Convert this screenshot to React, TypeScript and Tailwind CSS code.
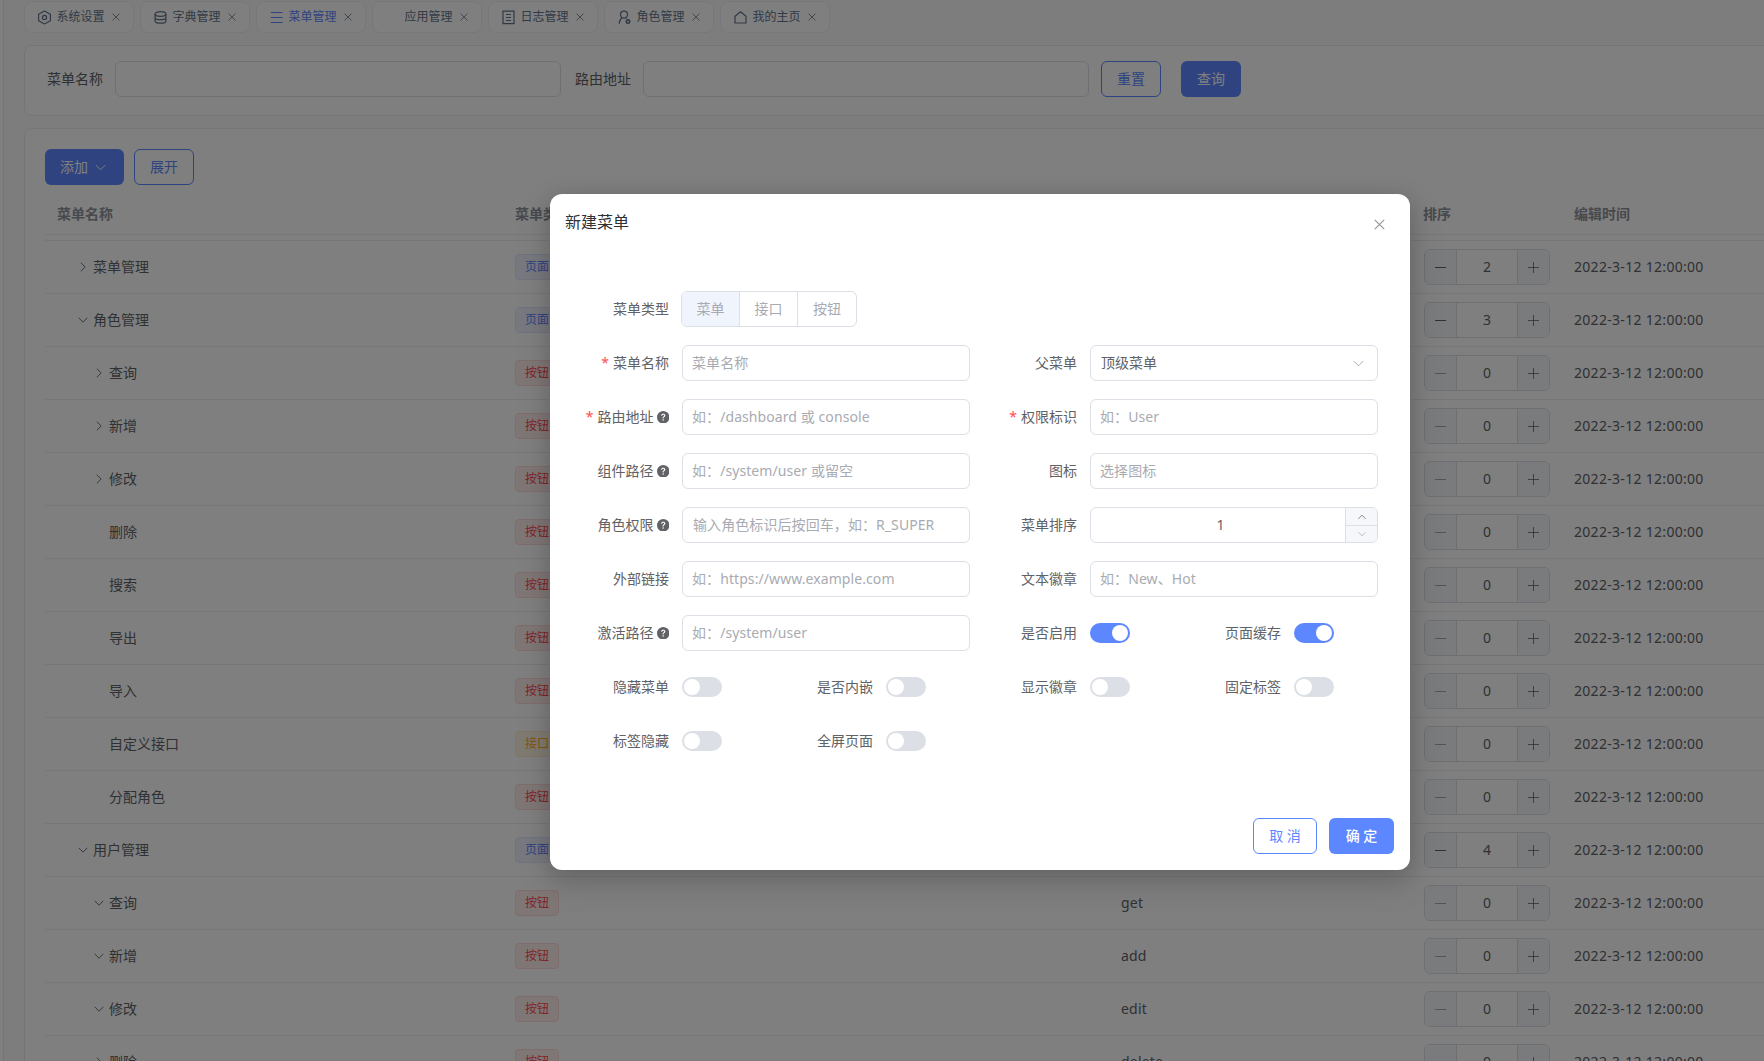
import type { ReactNode } from 'react'
import { BsQuestionCircleFill } from 'react-icons/bs'

const tabs = [
  { name: '系统设置', icon: 'setting' },
  { name: '字典管理', icon: 'dict' },
  { name: '菜单管理', icon: 'menu', active: true },
  { name: '应用管理', icon: '' },
  { name: '日志管理', icon: 'log' },
  { name: '角色管理', icon: 'role' },
  { name: '我的主页', icon: 'home' }
]

type Row = { name: string; level: number; arrow?: 'right' | 'down'; type: string; auth?: string; sort: number }

const rows: Row[] = [
  { name: '菜单管理', level: 1, arrow: 'right', type: '页面', sort: 2 },
  { name: '角色管理', level: 1, arrow: 'down', type: '页面', sort: 3 },
  { name: '查询', level: 2, arrow: 'right', type: '按钮', sort: 0 },
  { name: '新增', level: 2, arrow: 'right', type: '按钮', sort: 0 },
  { name: '修改', level: 2, arrow: 'right', type: '按钮', sort: 0 },
  { name: '删除', level: 2, type: '按钮', sort: 0 },
  { name: '搜索', level: 2, type: '按钮', sort: 0 },
  { name: '导出', level: 2, type: '按钮', sort: 0 },
  { name: '导入', level: 2, type: '按钮', sort: 0 },
  { name: '自定义接口', level: 2, type: '接口', sort: 0 },
  { name: '分配角色', level: 2, type: '按钮', sort: 0 },
  { name: '用户管理', level: 1, arrow: 'down', type: '页面', sort: 4 },
  { name: '查询', level: 2, arrow: 'down', type: '按钮', auth: 'get', sort: 0 },
  { name: '新增', level: 2, arrow: 'down', type: '按钮', auth: 'add', sort: 0 },
  { name: '修改', level: 2, arrow: 'down', type: '按钮', auth: 'edit', sort: 0 },
  { name: '删除', level: 2, arrow: 'right', type: '按钮', auth: 'delete', sort: 0 }
]

const tagStyles: Record<string, string> = {
  页面: 'bg-[#eff3ff] border-[#dfe7ff] text-[#5d87ff]',
  按钮: 'bg-[#ffeded] border-[#ffdbdb] text-[#ff4d4f]',
  接口: 'bg-[#fff6e6] border-[#ffedcc] text-[#ffae1f]'
}

const tableCols = 'grid grid-cols-[458px_303px_303px_303px_150px_400px]'

function TabIcon({ name }: { name: string }) {
  return (
    <svg className="size-[15px]" viewBox="0 0 15 15" fill="none" stroke="currentColor" strokeWidth="1.2">
      {name === 'setting' && (
        <>
          <path d="M7.5 1 13.4 4.2v6.6L7.5 14 1.6 10.8V4.2Z" strokeLinejoin="round" />
          <circle cx="7.5" cy="7.5" r="2.1" />
        </>
      )}
      {name === 'dict' && (
        <>
          <ellipse cx="7.5" cy="4" rx="5.4" ry="2.3" />
          <path d="M2.1 4v6.9c0 1.3 2.4 2.3 5.4 2.3s5.4-1 5.4-2.3V4M2.1 7.4c0 1.3 2.4 2.3 5.4 2.3s5.4-1 5.4-2.3" />
        </>
      )}
      {name === 'menu' && <path d="M1.8 2.5h11.8M1.8 7.5h11.8M1.8 12.5h11.8" />}
      {name === 'log' && <path d="M2 1.2h11v12.4H2ZM5 4.5h5M5 7.5h5M5 10.5h5" />}
      {name === 'role' && (
        <>
          <circle cx="7" cy="4.6" r="3.5" />
          <path d="M5.2 7.8C3.2 9 2.4 11 2.2 13.8M8.6 7.8l1 .8" />
          <circle cx="11" cy="11.6" r="1.7" strokeWidth="1.6" />
        </>
      )}
      {name === 'home' && <path d="M2 13V6.2L7.5 1.7 13 6.2V13Z" strokeLinejoin="round" />}
    </svg>
  )
}

function Cross({ className }: { className: string }) {
  return (
    <svg className={className} viewBox="0 0 10 10" fill="none" stroke="currentColor">
      <path d="M.7.7l8.6 8.6M9.3.7.7 9.3" />
    </svg>
  )
}

function Chevron({ className }: { className: string }) {
  return (
    <svg className={className} viewBox="0 0 12 12" fill="none" stroke="currentColor" strokeWidth="0.9">
      <path d="M1.7 3.8 6 8.2l4.3-4.4" />
    </svg>
  )
}

function SortInput({ value }: { value: number }) {
  return (
    <div className="flex h-9 w-[126px] overflow-hidden rounded-md border border-[#dcdfe6] text-[#606266]">
      <div className={`flex w-8 items-center justify-center border-r border-[#dcdfe6] bg-[#f5f7fa] ${value === 0 ? 'text-[#a8abb2]' : ''}`}>
        <span className="h-px w-[11px] bg-current" />
      </div>
      <div className="flex-1 text-center leading-[34px]">{value}</div>
      <div className="flex w-8 items-center justify-center border-l border-[#dcdfe6] bg-[#f5f7fa]">
        <svg className="size-[11px]" viewBox="0 0 11 11" stroke="currentColor" strokeWidth="0.8">
          <path d="M0 5.5h11M5.5 0v11" />
        </svg>
      </div>
    </div>
  )
}

function Field({ label, required, tip, children }: { label: string; required?: boolean; tip?: boolean; children: ReactNode }) {
  return (
    <div className="flex h-9 items-center">
      <div className="flex w-[108px] shrink-0 items-center justify-end whitespace-nowrap pr-px">
        {required && <span className="mr-1 text-[#ff4d4f]">*</span>}
        <span>{label}</span>
        {tip && <BsQuestionCircleFill className="ml-[3px] size-[12.5px]" />}
      </div>
      <div className="ml-3">{children}</div>
    </div>
  )
}

function Input({ placeholder, className = 'pl-[9px]' }: { placeholder: string; className?: string }) {
  return (
    <input
      className={`block h-9 w-[288px] rounded-md border border-[#dcdfe6] pb-[2px] tracking-[0.08px] placeholder:text-[#a8abb2] ${className}`}
      placeholder={placeholder}
    />
  )
}

function Switch({ on }: { on?: boolean }) {
  return (
    <div className={`flex h-5 w-10 items-center rounded-full px-0.5 ${on ? 'justify-end bg-[#5d87ff]' : 'bg-[#dcdfe6]'}`}>
      <span className="size-4 rounded-full bg-white" />
    </div>
  )
}

function MenuDialog() {
  return (
    <div className="flex h-[676px] w-[860px] flex-col rounded-xl bg-white px-3 shadow-[0_12px_32px_4px_rgba(0,0,0,0.12),0_4px_20px_rgba(0,0,0,0.12)]">
      <div className="flex h-[97px] justify-between pl-[3px] pr-[13px]">
        <h3 className="pt-4 text-base leading-6 text-[#303133]">新建菜单</h3>
        <Cross className="mt-[25px] size-[11px] text-[#909399]" />
      </div>

      {/* Form */}
      <div className="flex flex-1 flex-col gap-[18px]">
        <Field label="菜单类型">
          <div className="-ml-px flex h-9 w-44 overflow-hidden rounded-md border border-[#dcdfe6] text-center leading-[34px] text-[#a8abb2]">
            <span className="w-[58px] border-r border-[#dcdfe6] bg-[#f0f4fd]">菜单</span>
            <span className="w-[58px] border-r border-[#dcdfe6]">接口</span>
            <span className="flex-1">按钮</span>
          </div>
        </Field>
        <div className="grid grid-cols-[408px_408px] gap-y-[18px]">
          <Field label="菜单名称" required>
            <Input placeholder="菜单名称" />
          </Field>
          <Field label="父菜单">
            <div className="flex h-9 w-[288px] items-center justify-between rounded-md border border-[#dcdfe6] pl-[10px] pr-3">
              <span>顶级菜单</span>
              <Chevron className="size-[13px] text-[#a8abb2]" />
            </div>
          </Field>
          <Field label="路由地址" required tip>
            <Input placeholder="如：/dashboard 或 console" />
          </Field>
          <Field label="权限标识" required>
            <Input placeholder="如：User" />
          </Field>
          <Field label="组件路径" tip>
            <Input placeholder="如：/system/user 或留空" />
          </Field>
          <Field label="图标">
            <Input placeholder="选择图标" />
          </Field>
          <Field label="角色权限" tip>
            <Input placeholder="输入角色标识后按回车，如：R_SUPER" className="pl-[10px]" />
          </Field>
          <Field label="菜单排序">
            <div className="flex h-9 w-[288px] overflow-hidden rounded-md border border-[#dcdfe6]">
              <div className="flex-1 pl-[5px] text-center leading-[34px]">1</div>
              <div className="flex w-8 flex-col border-l border-[#dcdfe6] bg-[#f5f7fa]">
                <div className="flex h-[18px] items-center justify-center border-b border-[#dcdfe6]">
                  <Chevron className="size-[10px] rotate-180" />
                </div>
                <div className="flex flex-1 items-center justify-center">
                  <Chevron className="size-[10px] text-[#a8abb2]" />
                </div>
              </div>
            </div>
          </Field>
          <Field label="外部链接">
            <Input placeholder="如：https://www.example.com" />
          </Field>
          <Field label="文本徽章">
            <Input placeholder="如：New、Hot" />
          </Field>
          <Field label="激活路径" tip>
            <Input placeholder="如：/system/user" />
          </Field>
          <div className="grid grid-cols-2">
            <Field label="是否启用">
              <Switch on />
            </Field>
            <Field label="页面缓存">
              <Switch on />
            </Field>
          </div>
        </div>
        <div className="grid grid-cols-[204px_204px_204px_204px] gap-y-[18px]">
          {['隐藏菜单', '是否内嵌', '显示徽章', '固定标签', '标签隐藏', '全屏页面'].map((label) => (
            <Field key={label} label={label}>
              <Switch />
            </Field>
          ))}
        </div>
      </div>

      {/* Footer */}
      <div className="flex justify-end gap-3 pb-4 pr-1">
        <button className="h-9 w-16 rounded-md border border-[#5d87ff] text-[#5d87ff]">取 消</button>
        <button className="h-9 w-[65px] rounded-md bg-[#5d87ff] font-medium text-white">确 定</button>
      </div>
    </div>
  )
}

export default function App() {
  return (
    <div className="relative h-screen overflow-hidden bg-[#fafbfc] font-['Noto_Sans','Noto_Sans_CJK_SC',sans-serif] text-sm text-[#606266]">
      <div className="flex h-full">
        <div className="w-1 shrink-0 border-r border-[#e6e8ee] bg-white" />
        <div className="w-[1800px] shrink-0 pl-5">
          {/* Work tabs */}
          <div className="flex gap-1.5 pt-px">
            {tabs.map((tab) => (
              <div
                key={tab.name}
                className={`flex h-8 w-[110px] items-center rounded-lg border border-[#edeff3] bg-white pl-3 text-xs ${tab.active ? 'text-[#5d87ff]' : 'text-[#64748b]'}`}
              >
                <TabIcon name={tab.icon} />
                <span className="ml-[4.5px] mr-[7.5px] w-12 whitespace-nowrap">{tab.name}</span>
                <Cross className="size-2 text-[#64748b]" />
              </div>
            ))}
          </div>

          {/* Search */}
          <div className="mt-3 flex h-[71px] items-start rounded-lg border border-[#e9ebf0] bg-white pl-[22px] pt-[15px]">
            <span className="leading-9">菜单名称</span>
            <div className="ml-3 h-9 w-[446px] rounded-md border border-[#dcdfe6]" />
            <span className="ml-[14px] leading-9">路由地址</span>
            <div className="ml-3 h-9 w-[446px] rounded-md border border-[#dcdfe6]" />
            <button className="ml-3 h-9 w-[60px] rounded-md border border-[#5d87ff] text-[#5d87ff]">重置</button>
            <button className="ml-5 h-9 w-[60px] rounded-md bg-[#5d87ff] text-white">查询</button>
          </div>

          {/* Menu table */}
          <div className="mt-3 rounded-lg border border-[#e9ebf0] bg-white pl-5 pt-5">
            <div className="flex gap-[10px]">
              <button className="flex h-9 w-[79px] items-center gap-1.5 rounded-md bg-[#5d87ff] pl-[15px] text-white">
                添加
                <Chevron className="size-[13px]" />
              </button>
              <button className="h-9 w-[60px] rounded-md border border-[#5d87ff] text-[#5d87ff]">展开</button>
            </div>
            <div className={`${tableCols} mt-[9px] h-[41px] border-b border-[#ebeef5] font-bold leading-[40px] text-[#909399]`}>
              <span className="pl-3">菜单名称</span>
              <span className="pl-3">菜单类型</span>
              <span />
              <span />
              <span className="pl-[11px]">排序</span>
              <span className="pl-3">编辑时间</span>
            </div>
            <div className="h-1.5 border-b border-[#ebeef5]" />
            {rows.map((row, index) => (
              <div key={index} className={`${tableCols} h-[53px] items-center border-b border-[#ebeef5]`}>
                <div className={`flex items-center ${row.level === 1 ? 'pl-8' : 'pl-12'}`}>
                  <span className="mr-1 w-3">
                    {row.arrow && <Chevron className={`size-3 ${row.arrow === 'right' ? '-rotate-90' : ''}`} />}
                  </span>
                  {row.name}
                </div>
                <div className="pl-3">
                  <span className={`flex h-[26px] w-11 items-center justify-center rounded border text-xs ${tagStyles[row.type]}`}>
                    {row.type}
                  </span>
                </div>
                <span />
                <span className="pl-3 tracking-[0.2px]">{row.auth}</span>
                <div className="pl-3">
                  <SortInput value={row.sort} />
                </div>
                <span className="pl-3 tracking-[0.3px]">2022-3-12 12:00:00</span>
              </div>
            ))}
          </div>
        </div>
      </div>

      {/* Overlay */}
      <div className="absolute inset-0 bg-black/50 pl-[550px] pt-[194px]">
        <MenuDialog />
      </div>
    </div>
  )
}
